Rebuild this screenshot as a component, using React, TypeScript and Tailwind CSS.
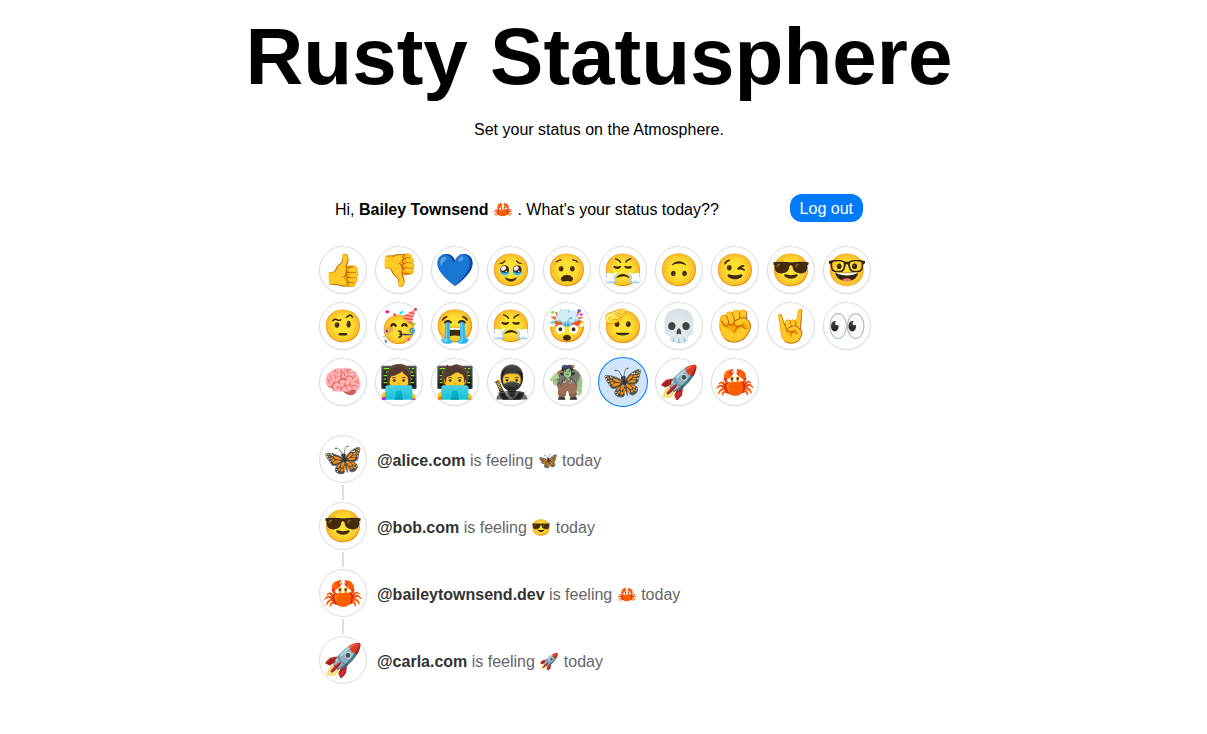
const row1 = ["👍", "👎", "💙", "🥹", "😧", "😤", "🙃", "😉", "😎", "🤓"];
const row2 = ["🤨", "🥳", "😭", "😤", "🤯", "🫡", "💀", "✊", "🤘", "👀"];
const row3 = ["🧠", "👩‍💻", "🧑‍💻", "🥷", "🧌", "🦋", "🚀", "🦀"];
const emojis = [...row1, ...row2, ...row3];

const feed = [
  { handle: "@alice.com", emoji: "🦋" },
  { handle: "@bob.com", emoji: "😎" },
  { handle: "@baileytownsend.dev", emoji: "🦀" },
  { handle: "@carla.com", emoji: "🚀" },
];

export default function App() {
  return (
    <div className="min-h-[734px] bg-white font-['Helvetica','Arial',sans-serif] text-black">
      <div className="flex flex-col items-center w-[1198px]">
        <h1 className="text-[80px] font-bold leading-[92px] mt-[11px]">Rusty Statusphere</h1>
        <p className="text-base mt-[15px]">Set your status on the Atmosphere.</p>
      </div>

      <div className="w-[552px] ml-[319px] mt-[52px]">
        <div className="flex items-center justify-between pl-[16px] pr-[8px] h-[28px]">
          <div className="text-base pt-[4px]">
            Hi, <b>Bailey Townsend 🦀</b> . What's your status today??
          </div>
          <button className="bg-[#007bff] text-white text-base rounded-[12px] px-[10px] pt-[2px] h-[28px]">Log out</button>
        </div>

        <div className="grid grid-cols-[repeat(10,48px)] gap-[8px] mt-[24px]">
          {emojis.map((e, i) => (
            <button
              key={i}
              className={
                i === 25
                  ? "w-[48px] h-[48px] rounded-full border border-[#007bff] bg-[#d0e4fb] text-[32px] leading-none flex items-center justify-center scale-[1.04]"
                  : "w-[48px] h-[48px] rounded-full border border-[#dddddd] bg-white text-[32px] leading-none flex items-center justify-center shadow-[0_1px_2px_rgba(0,0,0,0.06)]"
              }
            >
              {e}
            </button>
          ))}
        </div>

        <div className="mt-[29px] flex flex-col">
          {feed.map((s, i) => (
            <div key={s.handle} className="flex items-start gap-[10px] h-[67px] last:h-[48px]">
              <div className="flex flex-col items-center w-[48px]">
                <div className="w-[48px] h-[48px] rounded-full border border-[#dddddd] bg-white text-[32px] leading-none flex items-center justify-center">
                  {s.emoji}
                </div>
                {i < feed.length - 1 && <div className="w-[2px] h-[15px] mt-[2px] bg-[#dddddd]" />}
              </div>
              <div className="text-base text-[#666666] h-[48px] pt-[4px] flex items-center whitespace-pre">
                <span>
                  <b className="text-[#333333]">{s.handle}</b> is feeling {s.emoji} today
                </span>
              </div>
            </div>
          ))}
        </div>
      </div>
    </div>
  );
}
